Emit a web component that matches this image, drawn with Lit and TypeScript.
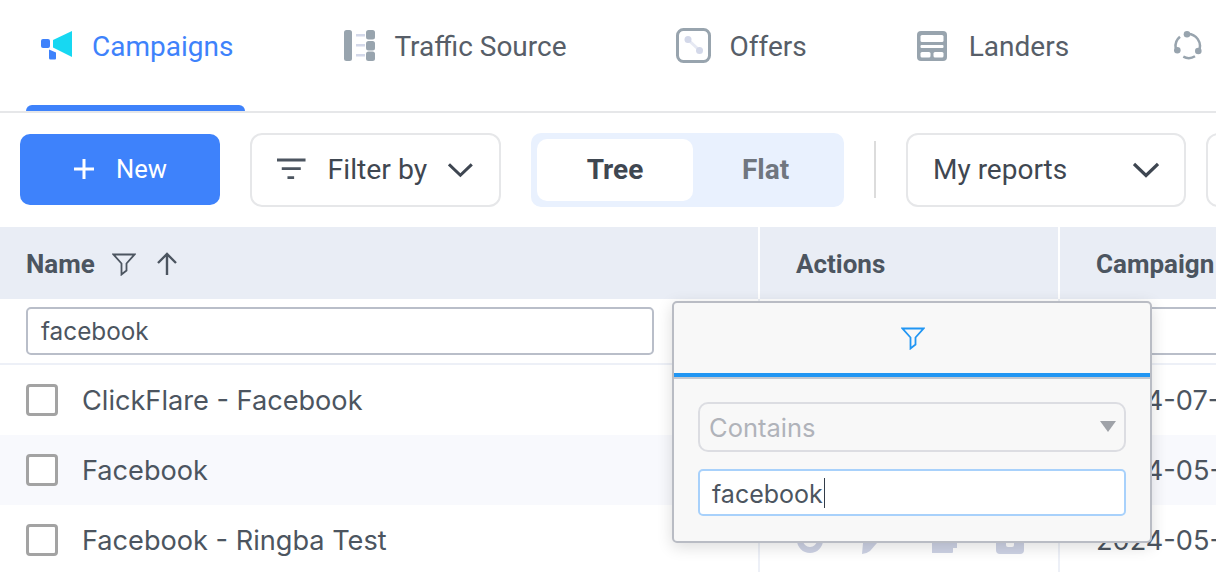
import { LitElement, html, css } from "lit";
import { customElement } from "lit/decorators.js";

const chevron = html`<svg class="chev" width="26" height="16" viewBox="0 0 26 16"><path d="M1 2 13 13.500 25 2" fill="none" stroke="#3e4651" stroke-width="3.2"/></svg>`;
const funnel = (c: string, w: number) => html`<svg width="${w}" height="${w}" viewBox="0 0 24 24"><path d="M1.500 2.500h21L14.500 11.500v7l-5 4V11.500z" fill="none" stroke="${c}" stroke-width="1.800" stroke-linejoin="miter"/></svg>`;

@customElement("app-root")
export class AppRoot extends LitElement {
  static styles = css`
    :host { display: block; width: 1216px; height: 572px; overflow: hidden; position: relative; background: #fff; font-family: Roboto, sans-serif; color: #4c5560; }
    * { box-sizing: border-box; }
    .nav { height: 113px; border-bottom: 2px solid #e6e7e9; display: flex; padding-left: 26px; gap: 83px; white-space: nowrap; }
    .tab { height: 111px; display: flex; align-items: center; gap: 20px; padding: 0 12px 19px 15px; font-size: 28px; position: relative; color: #575e68; flex: none; }
    .tab svg { flex: none; display: block; margin-bottom: 1px; }
    .tab.active { color: #3e82fb; }
    .tab.active::after { content: ""; position: absolute; left: 0; right: 0; bottom: 0; height: 6px; background: #3e82fb; border-radius: 6px 6px 0 0; }
    .tab.traffic svg { margin-left: 1px; margin-right: -1px; }
    .tab.offers { margin-left: -1px; }
    .tab.offers svg { margin-right: -1px; }
    .tab.landers svg { margin-right: 2px; }
    .tab.last { margin-left: -6px; }
    .toolbar { height: 114px; display: flex; align-items: center; padding: 0 0 1px 20px; white-space: nowrap; }
    .new { width: 200px; height: 71px; background: #3e82fb; border-radius: 10px; color: #fff; display: flex; align-items: center; justify-content: center; gap: 21px; font-size: 25.500px; padding-bottom: 2px; flex: none; }
    .box { height: 74px; border: 2px solid #e6e7e9; border-radius: 12px; display: flex; align-items: center; font-size: 28px; color: #3f4751; flex: none; }
    .filter { width: 251px; margin-left: 30px; padding: 0 26px 0 25px; gap: 22px; font-size: 28.400px; }
    .filter .chev { margin-left: -1px; }
    .toggle { width: 313px; height: 74px; margin-left: 30px; padding: 6px; background: #e9f1fe; border-radius: 10px; display: flex; font-size: 28px; font-weight: 700; flex: none; }
    .toggle div { display: flex; align-items: center; justify-content: center; }
    .toggle .on { width: 156px; background: #fff; border-radius: 10px; color: #3f4751; }
    .toggle .off { flex: 1; color: #70767f; }
    .sep { width: 2px; height: 57px; background: #dcdcdc; margin-left: 30px; flex: none; }
    .reports { width: 280px; margin-left: 30px; padding: 0 25px; justify-content: space-between; }
    .more { width: 40px; margin-left: 20px; }
    .grid { display: grid; grid-template-columns: 758px 300px 1fr; }
    .th { height: 72px; background: #e9edf5; font-weight: 700; font-size: 26px; color: #4c5560; display: flex; align-items: center; padding: 1px 0 0 26px; white-space: nowrap; overflow: hidden; border-left: 2px solid #fff; }
    .th:first-child { border-left: 0; padding-left: 26px; gap: 17px; }
    .th.act { padding-left: 36px; }
    .th.camp { padding-left: 36px; }
    .th svg { display: block; flex: none; }
    .thicons { display: flex; gap: 20px; align-items: center; }
    .frow { height: 66px; border-bottom: 2px solid #edf0f7; display: flex; align-items: flex-start; padding-top: 8px; border-left: 2px solid #edf0f7; }
    .frow.first { border-left: 0; padding-left: 26px; }
    .finput { width: 628px; height: 48px; border: 2px solid #b9bec9; border-radius: 5px; font-family: Inter, sans-serif; font-size: 24.300px; color: #4c5560; padding: 0 13px; display: flex; align-items: center; }
    .finput.tail { width: 100%; margin-left: 36px; border-right: 0; border-radius: 5px 0 0 5px; }
    .td { height: 70px; display: flex; align-items: center; font-family: Inter, sans-serif; font-size: 27.150px; color: #4c5560; white-space: nowrap; border-left: 2px solid #edf0f7; overflow: hidden; }
    .td.name { border-left: 0; padding-left: 26px; gap: 24px; }
    .td.alt { background: #f8f9fd; }
    .td.date { padding-left: 36px; }
    .td.icons { padding-left: 36px; gap: 34px; }
    .td.icons svg { flex: none; display: block; }
    .td.icons .cup { margin-left: 12px; }
    .td.icons .clip { margin-left: 4px; }
    .cb { width: 32px; height: 32px; border: 3.800px solid #a3a3a3; border-radius: 4px; background: #fff; flex: none; }
    .popup { position: absolute; left: 672px; top: 301px; width: 480px; height: 242px; background: #f8f8f8; border: 2px solid #b9bcc4; border-radius: 5px; box-shadow: 0 4px 16px rgba(0,0,0,.14); font-family: Inter, sans-serif; }
    .ptab { height: 74px; border-bottom: 4px solid #2196f3; display: flex; align-items: center; justify-content: center; padding-left: 2px; box-shadow: 0 2px 0 #c4c8d0; }
    .ptab svg { display: block; }
    .pbody { padding: 25px 24px 0; display: flex; flex-direction: column; gap: 17px; }
    .sel { height: 50px; border: 2px solid #dcdde2; border-radius: 10px; display: flex; align-items: center; justify-content: space-between; padding: 0 8px 0 9px; color: #b0b3ba; font-size: 25.500px; }
    .arrow { width: 0; height: 0; border-left: 8px solid transparent; border-right: 8px solid transparent; border-top: 11px solid #9fa2a8; margin-top: -2px; }
    .pinput { height: 47px; border: 2px solid #a8d1fb; border-radius: 5px; background: #fff; color: #4c5560; font-size: 25px; display: flex; align-items: center; padding: 2px 12px 0; }
    .caret { width: 1.500px; height: 30px; background: #333c48; margin-left: 1px; margin-top: -2px; }
  `;

  render() {
    const rows = [
      ["ClickFlare - Facebook", "2024-07-", false],
      ["Facebook", "2024-05-", true],
      ["Facebook - Ringba Test", "2024-05-", false],
    ] as const;
    return html`
      <div class="nav">
        <div class="tab active">
          <svg width="31" height="29" viewBox="0 0 31 29"><path d="M12 9 31 0v26L12 16.500z" fill="#17d8f2"/><rect x="0" y="8" width="9" height="9" rx="2" fill="#3e82fb"/><path d="M8 18.500 15 21.500v6q0 1-1 1H9.500q-1.500 0-1.500-1.500z" fill="#3e82fb"/></svg>
          Campaigns
        </div>
        <div class="tab traffic">
          <svg width="31" height="31" viewBox="0 0 31 31"><rect width="8" height="31" rx="2.500" fill="#98a4ae"/><rect x="12" y="4" width="9" height="2.500" fill="#d3d8e9"/><rect x="12" y="14" width="9" height="2.500" fill="#d3d8e9"/><rect x="12" y="24" width="9" height="2.500" fill="#d3d8e9"/><rect x="22" y="0" width="9" height="9.500" rx="2.500" fill="#98a4ae"/><rect x="22" y="11" width="9" height="9.500" rx="2.500" fill="#98a4ae"/><rect x="22" y="21.500" width="9" height="9.500" rx="2.500" fill="#98a4ae"/></svg>
          Traffic Source
        </div>
        <div class="tab offers">
          <svg width="35" height="35" viewBox="0 0 35 35"><rect x="1.500" y="1.500" width="32" height="32" rx="6" fill="#fff" stroke="#98a4ae" stroke-width="3"/><path d="M14 13.500 21.500 20.500" stroke="#e6e9f3" stroke-width="3"/><circle cx="12" cy="11.500" r="3.500" fill="#d3d8e9"/><circle cx="23.500" cy="22.500" r="3.500" fill="#d3d8e9"/></svg>
          Offers
        </div>
        <div class="tab landers">
          <svg width="30" height="30" viewBox="0 0 30 30"><rect width="30" height="30" rx="4" fill="#98a4ae"/><rect x="3.500" y="4" width="23" height="7" rx="1.500" fill="#fff"/><rect x="3.500" y="14" width="23" height="3" rx="1" fill="#fff"/><rect x="3.500" y="21" width="10" height="5.500" rx="1.500" fill="#fff"/><rect x="16.500" y="21" width="10" height="5.500" rx="1.500" fill="#fff"/></svg>
          Landers
        </div>
        <div class="tab last">
          <svg width="30" height="30" viewBox="0 0 30 30"><g fill="none" stroke="#98a4ae" stroke-width="2.500"><path d="M7 5.700A12 12 0 0 0 2.700 17"/><path d="M14 3A12 12 0 0 1 25.800 20"/><path d="M10.300 25.700A12 12 0 0 0 22 25.300"/></g><g fill="#98a4ae"><circle cx="14" cy="3.300" r="3.300"/><circle cx="4.300" cy="19.200" r="3.300"/><circle cx="25.300" cy="20" r="3.300"/></g></svg>
        </div>
      </div>
      <div class="toolbar">
        <div class="new">
          <svg width="22" height="22" viewBox="0 0 22 22"><path d="M11 1v20M1 11h20" stroke="#fff" stroke-width="3"/></svg>
          New
        </div>
        <div class="box filter">
          <svg width="30" height="24" viewBox="0 0 30 24"><path d="M0 1.500h30M5 10.500h20M11 20h7" stroke="#4c5560" stroke-width="3"/></svg>
          <span>Filter by</span>${chevron}
        </div>
        <div class="toggle"><div class="on">Tree</div><div class="off">Flat</div></div>
        <div class="sep"></div>
        <div class="box reports"><span>My reports</span>${chevron}</div>
        <div class="box more"></div>
      </div>
      <div class="grid">
        <div class="th">
          <span>Name</span>
          <span class="thicons">
            ${funnel("#4c5560", 24)}
            <svg width="22" height="24" viewBox="0 0 22 24"><path d="M11 23V2M2 11l9-9 9 9" fill="none" stroke="#4c5560" stroke-width="2.400"/></svg>
          </span>
        </div>
        <div class="th act">Actions</div>
        <div class="th camp">Campaign</div>

        <div class="frow first"><div class="finput">facebook</div></div>
        <div class="frow"></div>
        <div class="frow"><div class="finput tail"></div></div>

        ${rows.map(([n, d, alt], i) => html`
          <div class="td name ${alt ? "alt" : ""}"><div class="cb"></div><span>${n}</span></div>
          <div class="td icons ${alt ? "alt" : ""}">
            ${i === 2 ? html`
              <svg width="30" height="30" viewBox="0 0 30 30"><circle cx="14" cy="15" r="10" fill="none" stroke="#cdd2e4" stroke-width="6"/></svg>
              <svg width="26" height="30" viewBox="0 0 26 30"><path d="M2 29 3 18 18 4l6 6L10 26q-3 2.500-8 3z" fill="#cdd2e4"/></svg>
              <svg class="cup" width="26" height="30" viewBox="0 0 26 30"><path d="M0 2H21V16H25V23H21V27q0 1-1 1H0z" fill="#cdd2e4"/></svg>
              <svg class="clip" width="30" height="30" viewBox="0 0 30 30"><rect x="0" y="1" width="28" height="28" rx="4" fill="#cdd2e4"/><rect x="10" y="16" width="8" height="6" rx="2" fill="#fff"/></svg>
            ` : ""}
          </div>
          <div class="td date ${alt ? "alt" : ""}">${d}</div>
        `)}
      </div>
      <div class="popup">
        <div class="ptab">${funnel("#2196f3", 24)}</div>
        <div class="pbody">
          <div class="sel"><span>Contains</span><span class="arrow"></span></div>
          <div class="pinput">facebook<span class="caret"></span></div>
        </div>
      </div>
    `;
  }
}
